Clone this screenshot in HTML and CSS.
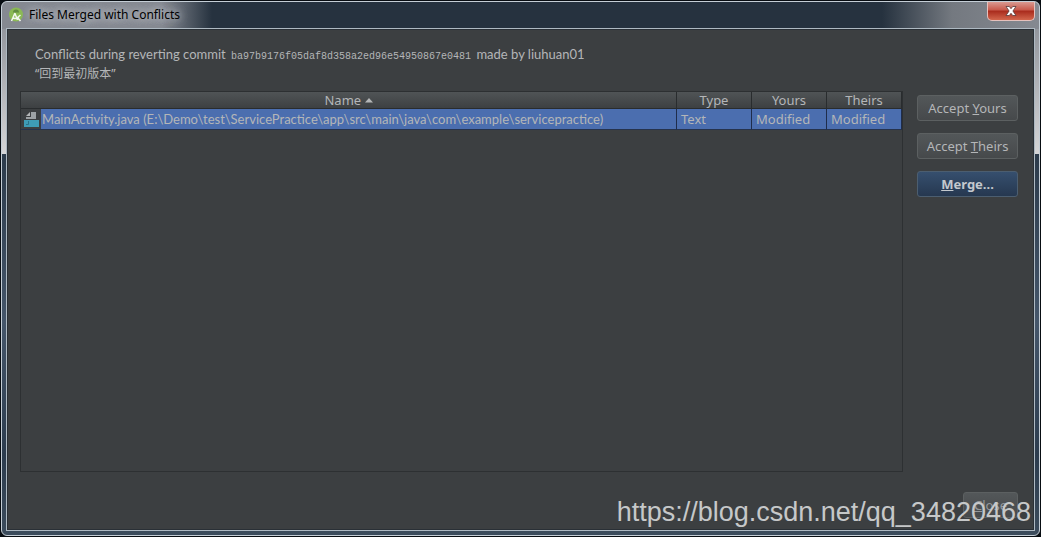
FILE: index.html
```html
<!DOCTYPE html>
<html lang="en">
<head>
<meta charset="utf-8">
<title>Files Merged with Conflicts</title>
<link rel="stylesheet" href="styles.css">
</head>
<body>
<div class="window">
  <header class="titlebar">
    <svg class="app-icon" width="14" height="16" viewBox="0 0 14 16" aria-hidden="true">
      <circle cx="7" cy="7.500" r="7" fill="#8bb955"/>
      <path d="M4 5.500a3 3 0 0 1 6 0z" fill="#628c43"/>
      <path d="M6 6L2.500 14M6 6.500l2.500 6.500M4 11q3.500 1.500 6-1.500M11.500 8L8.500 10.500l3 3.500" fill="none" stroke="#f4f8f0" stroke-width="1.500"/>
    </svg>
    <h1 class="title">Files Merged with Conflicts</h1>
    <button class="window-close" aria-label="Close window">
      <svg width="12" height="10" viewBox="0 0 12 10" aria-hidden="true">
        <path d="M1 .5h3.300L6 2.700 7.700.5H11L7.900 5 11 9.500H7.700L6 7.300 4.300 9.500H1L4.100 5z" fill="#fff" stroke="#573838" stroke-width=".8"/>
      </svg>
    </button>
  </header>
  <main class="content">
    <p class="message">Conflicts during reverting commit <code class="hash">ba97b9176f05daf8d358a2ed96e54950867e0481</code> made by liuhuan01<br><span class="commit-name" lang="zh">“回到最初版本”</span></p>
    <div class="body">
      <div class="table-box">
        <table class="files">
          <colgroup><col><col class="narrow"><col class="narrow"><col class="narrow"></colgroup>
          <thead>
            <tr>
              <th>Name <svg width="8" height="5" viewBox="0 0 8 5" aria-hidden="true"><path d="M0 4.500L4 0l4 4.500z" fill="#b5b7b8"/></svg></th>
              <th>Type</th><th>Yours</th><th>Theirs</th>
            </tr>
          </thead>
          <tbody>
            <tr>
              <td class="name-cell">
                <div class="file">
                  <span class="file-icon"><svg width="16" height="16" viewBox="0 0 16 16" aria-hidden="true">
                    <path d="M7 1h5v7H2V6h5z" fill="#9da2a5"/><path d="M6 1v4H2z" fill="#b3b6b8"/>
                    <path d="M0 9h15v7H0z" fill="#3e9cb7"/>
                    <path d="M4.500 10v3.500H2" fill="none" stroke="#2a7288"/>
                  </svg></span>
                  <span class="file-name">MainActivity.java (E:\Demo\test\ServicePractice\app\src\main\java\com\example\servicepractice)</span>
                </div>
              </td>
              <td>Text</td><td>Modified</td><td>Modified</td>
            </tr>
          </tbody>
        </table>
      </div>
      <div class="actions">
        <button class="button">Accept <u>Y</u>ours</button>
        <button class="button">Accept <u>T</u>heirs</button>
        <button class="button primary"><u>M</u>erge...</button>
      </div>
    </div>
    <footer class="footer"><button class="button close"><u>C</u>lose</button></footer>
  </main>
  <div class="watermark">https://blog.csdn.net/qq_34820468</div>
</div>
</body>
</html>
```
FILE: styles.css
```css
* { box-sizing: border-box; }
body {
  margin: 0;
  padding: 1px;
  height: 100vh;
  background: #080d12;
  font: 13px/18px "Noto Sans", "Noto Sans CJK SC", sans-serif;
  color: #b4b6b8;
}
.window {
  position: relative;
  display: flex;
  flex-direction: column;
  height: 100%;
  padding: 0 4px 4px;
  border: 1px solid #c5ced6;
  border-radius: 6px;
  background:
    linear-gradient(90deg, #858991 0, #858991 160px, #26323f 210px, #26323f 880px, #747980 950px, #858991 100%) 0 0 / 100% 27px no-repeat,
    linear-gradient(#858991, #d5d5d7 152px, #2c3b4b 152px, #45566a 60%, #2c3c4e 85%, #3c4c5c);
}
.titlebar {
  display: flex;
  align-items: center;
  height: 26px;
  padding-left: 3px;
}
.title {
  flex: 1;
  margin: 0 0 0 6px;
  font-size: 12px;
  font-weight: 400;
  color: #000;
  text-shadow: 0 0 8px #c4c8cf, 0 0 8px #c4c8cf;
}
.window-close {
  align-self: flex-start;
  display: flex;
  align-items: center;
  justify-content: center;
  width: 48px;
  height: 19px;
  padding: 0;
  border: 1px solid #e5c1bd;
  border-top: 0;
  border-radius: 0 0 5px 5px;
  background: linear-gradient(#d99a91, #c7584a 45%, #a92b1c 50%, #d2664d);
}
.content {
  flex: 1;
  display: flex;
  flex-direction: column;
  min-height: 0;
  padding: 16px 16px 12px 13px;
  border: 1px solid #aeb9c2;
  background: #3c3f41;
  box-shadow: inset 0 0 0 1px #2a3036;
}
.message {
  margin: 0 0 8px;
  padding-left: 15px;
  font-family: Lato, "Noto Sans", sans-serif;
  line-height: 19px;
}
.hash {
  margin: 0 2px;
  font: 10px "Liberation Mono", monospace;
}
.commit-name { font: 12px "Noto Sans", "Noto Sans CJK SC", sans-serif; }
.body {
  flex: 1;
  display: flex;
  gap: 14px;
  min-height: 0;
}
.table-box {
  flex: 1;
  min-width: 0;
  border: 1px solid #2d3032;
}
.files {
  width: 100%;
  table-layout: fixed;
  border-collapse: separate;
  border-spacing: 0;
}
.narrow { width: 75px; }
.files th {
  height: 17px;
  padding: 0;
  border-right: 1px solid #292c2e;
  border-bottom: 1px solid #292c2e;
  background: linear-gradient(#505456, #3d4042);
  font-weight: 400;
  line-height: 16px;
}
.files th svg { vertical-align: 2px; }
.files td {
  height: 21px;
  padding: 0 4px;
  border-right: 1px solid #1f2d4b;
  border-bottom: 1px solid #26334d;
  background: #4b6eaf;
  line-height: 20px;
}
.files .name-cell { padding: 0; }
.file { display: flex; }
.file-icon {
  display: flex;
  align-items: center;
  width: 20px;
  padding-left: 3px;
  background: #3c3f41;
}
.file-name {
  flex: 1;
  padding-left: 1px;
  font-family: Lato, "Noto Sans", sans-serif;
  white-space: nowrap;
  overflow: hidden;
}
.actions {
  display: flex;
  flex-direction: column;
  gap: 12px;
  width: 101px;
  padding-top: 4px;
}
.button {
  height: 26px;
  padding: 0;
  border: 1px solid #5c6061;
  border-radius: 3px;
  background: linear-gradient(#535759, #46494b);
  font: inherit;
  color: #b4b6b8;
}
.primary {
  border-color: #4c5e70;
  background: linear-gradient(#364f6e, #263850);
  font-weight: 700;
  color: #c4c9ce;
}
.footer {
  display: flex;
  justify-content: flex-end;
  padding-top: 20px;
}
.close { width: 55px; color: #96999b; }
.watermark {
  position: absolute;
  right: 8px;
  bottom: 7px;
  font: 27px/32px "Liberation Sans", Arial, sans-serif;
  color: #c6c8c9;
}
```
